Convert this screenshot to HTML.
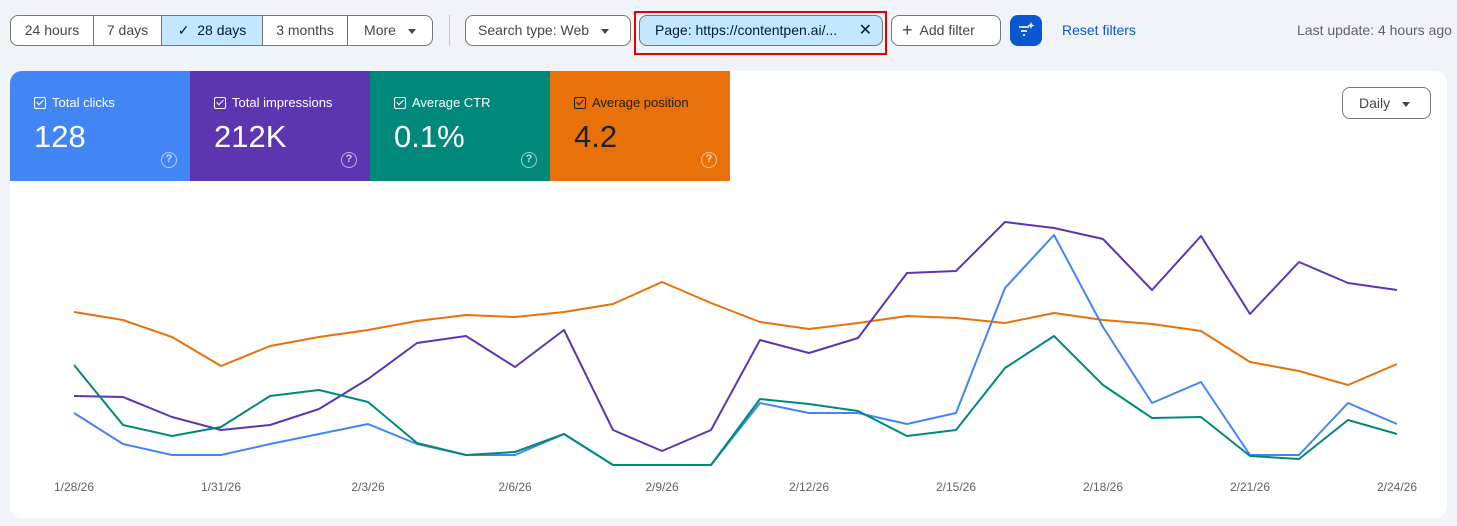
<!DOCTYPE html>
<html><head><meta charset="utf-8"><style>
*{box-sizing:border-box;margin:0;padding:0}
body{width:1457px;height:526px;background:#f0f4f9;font-family:"Liberation Sans",Roboto,sans-serif;position:relative;overflow:hidden;color:#1f1f1f}
.seg{position:absolute;top:15px;left:10px;height:31px;width:423px;display:flex;border:1px solid #747775;border-radius:8px;overflow:hidden;background:#fff}
.seg div{text-align:center;line-height:29px;font-size:14px;color:#444746;border-right:1px solid #747775;white-space:nowrap}
.seg div:last-child{border-right:none}
.seg .on{background:#c2e7ff;color:#001d35}
.btn{position:absolute;top:15px;height:31px;border:1px solid #747775;border-radius:8px;line-height:29px;font-size:14px;color:#444746;background:#fff;padding:0 12px;white-space:nowrap}
.caret{display:inline-block;width:0;height:0;border-left:4px solid transparent;border-right:4px solid transparent;border-top:5px solid #444746;vertical-align:middle;margin-left:12px}
.card{position:absolute;left:10px;top:71px;width:1437px;height:447px;background:#fff;border-radius:12px;overflow:hidden}
.m{position:absolute;top:0;width:180px;height:110px;color:#fff}
.m .l{position:absolute;left:24px;top:24px;font-size:13px}
.m .l i{display:inline-block;width:12px;height:12px;border:1.5px solid currentColor;border-radius:2px;vertical-align:-2px;margin-right:6px;position:relative}
.m .l i:after{content:"";position:absolute;left:3px;top:0px;width:3px;height:6px;border-right:1.5px solid currentColor;border-bottom:1.5px solid currentColor;transform:rotate(45deg)}
.m .v{position:absolute;left:24px;top:48px;font-size:31px}
.m .q{position:absolute;left:151px;top:81px;width:16px;height:16px;border:1.5px solid rgba(255,255,255,.6);border-radius:50%;font-size:11px;font-weight:bold;text-align:center;line-height:13px;color:rgba(255,255,255,.7)}
</style></head><body>
<div class="seg"><div style="width:83px">24 hours</div><div style="width:68px">7 days</div><div class="on" style="width:101px">✓&nbsp; 28 days</div><div style="width:85px">3 months</div><div style="flex:1">More<span class="caret"></span></div></div>
<div style="position:absolute;left:449px;top:15px;width:1px;height:31px;background:#c4c7c5"></div>
<div class="btn" style="left:465px;width:166px">Search type: Web<span class="caret"></span></div>
<div style="position:absolute;left:634px;top:11px;width:253px;height:44px;border:2px solid #e00000"></div>
<div class="btn" style="left:639px;width:244px;background:#c2e7ff;color:#001d35;padding-left:15px">Page: https://contentpen.ai/... <span style="position:absolute;right:10px;font-size:16px">✕</span></div>
<div class="btn" style="left:891px;width:110px;padding-left:10px"><span style="font-size:18px;vertical-align:-1px">+</span>&nbsp; Add filter</div>
<div style="position:absolute;left:1010px;top:15px;width:32px;height:31px;background:#0b57d0;border-radius:8px">
<svg width="32" height="31"><g stroke="#fff" stroke-width="1.6"><line x1="9" y1="12" x2="19" y2="12"/><line x1="11" y1="16" x2="17" y2="16"/><line x1="13" y1="20" x2="15" y2="20"/></g><path d="M21 7l1 2.5 2.5 1-2.5 1-1 2.5-1-2.5-2.5-1 2.5-1z" fill="#fff"/></svg></div>
<div style="position:absolute;left:1062px;top:22px;font-size:14px;color:#0b57d0">Reset filters</div>
<div style="position:absolute;left:1297px;top:22px;font-size:14px;color:#5f6368;white-space:nowrap">Last update: 4 hours ago</div>
<div class="card">
<div class="m" style="left:0;background:#4285f4"><div class="l"><i></i>Total clicks</div><div class="v">128</div><div class="q">?</div></div>
<div class="m" style="left:180px;background:#5e35b1"><div class="l"><i></i>Total impressions</div><div class="v">212K</div><div class="q">?</div></div>
<div class="m" style="left:360px;background:#00897b"><div class="l"><i></i>Average CTR</div><div class="v">0.1%</div><div class="q">?</div></div>
<div class="m" style="left:540px;background:#e8710a;color:#202124"><div class="l"><i></i>Average position</div><div class="v">4.2</div><div class="q" style="border-color:rgba(255,255,255,.6)">?</div></div>
<div style="position:absolute;left:1332px;top:16px;width:89px;height:32px;border:1px solid #747775;border-radius:8px;font-size:14px;line-height:30px;padding-left:16px;color:#444746">Daily<span class="caret"></span></div>
</div>
<svg style="position:absolute;left:0;top:0" width="1457" height="526" fill="none" stroke-width="2" stroke-linejoin="round">
<polyline stroke="#e8710a" points="74,312 123,320 172,337 221,366 270,346 319,337 368,330 417,321 466,315 515,317 564,312 613,304 662,282 711,303 760,322 809,329 858,323 907,316 956,318 1005,323 1054,313 1103,320 1152,324 1201,331 1250,362 1299,371 1348,385 1397,364"/>
<polyline stroke="#5e35b1" points="74,396 123,397 172,417 221,430 270,425 319,409 368,379 417,343 466,336 515,367 564,330 613,430 662,451 711,430 760,340 809,353 858,338 907,273 956,271 1005,222 1054,228 1103,239 1152,290 1201,236 1250,314 1299,262 1348,283 1397,290"/>
<polyline stroke="#4285f4" points="74,413 123,444 172,455 221,455 270,444 319,434 368,424 417,444 466,455 515,455 564,434 613,465 662,465 711,465 760,403 809,413 858,413 907,424 956,413 1005,288 1054,235 1103,327 1152,403 1201,382 1250,455 1299,455 1348,403 1397,424"/>
<polyline stroke="#00897b" points="74,365 123,425 172,436 221,427 270,396 319,390 368,402 417,443 466,455 515,452 564,434 613,465 662,465 711,465 760,399 809,404 858,411 907,436 956,430 1005,368 1054,336 1103,385 1152,418 1201,417 1250,456 1299,459 1348,420 1397,434"/>
<g fill="#5f6368" stroke="none" font-size="12" text-anchor="middle" font-family="Liberation Sans,sans-serif">
<text x="74" y="491">1/28/26</text><text x="221" y="491">1/31/26</text><text x="368" y="491">2/3/26</text><text x="515" y="491">2/6/26</text><text x="662" y="491">2/9/26</text><text x="809" y="491">2/12/26</text><text x="956" y="491">2/15/26</text><text x="1103" y="491">2/18/26</text><text x="1250" y="491">2/21/26</text><text x="1397" y="491">2/24/26</text></g>
</svg>
</body></html>
